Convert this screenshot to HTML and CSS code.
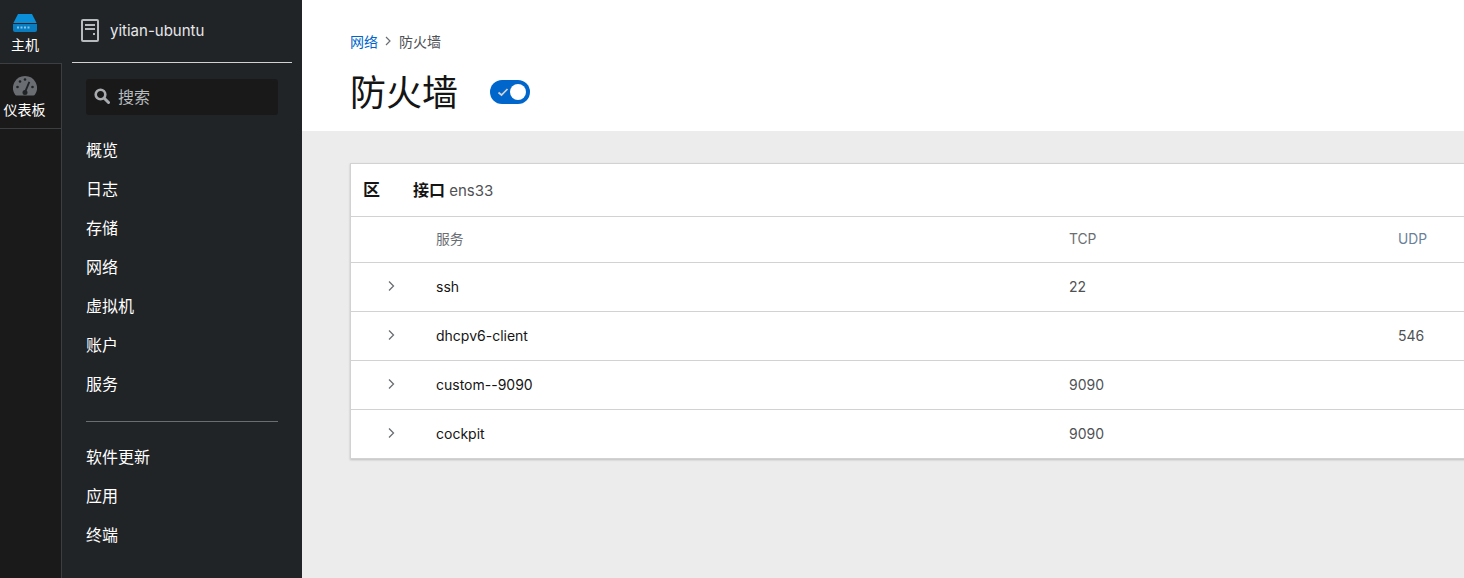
FILE: index.html
```html
<!DOCTYPE html>
<html lang="zh-CN">
<head>
<meta charset="utf-8">
<title>防火墙</title>
<link rel="stylesheet" href="styles.css">
</head>
<body>
<div class="app">
  <nav class="rail">
    <a class="rail-item rail-active">
      <svg class="rail-icon" viewBox="0 0 24 18" width="24" height="18"><path fill="#0a8fd8" d="M5 0h14l4.600 9H.4z"/><path fill="#0a7cc0" d="M0 10h24v6a2 2 0 0 1-2 2H2a2 2 0 0 1-2-2z"/><g fill="#7fc4ea"><rect x="4" y="12.500" width="2" height="2"/><rect x="7.500" y="12.500" width="2" height="2"/><rect x="11" y="12.500" width="2" height="2"/><rect x="14.500" y="12.500" width="2" height="2"/></g></svg>
      <span>主机</span>
    </a>
    <a class="rail-item rail-dash">
      <svg class="rail-icon" viewBox="0 0 24 20" width="24" height="20"><path fill="#6a6e73" d="M12 0a12 12 0 0 1 10 18.600 2 2 0 0 1-1.600.900H3.600A2 2 0 0 1 2 18.600 12 12 0 0 1 12 0z"/><g fill="#212427"><circle cx="4.500" cy="11" r="1.300"/><circle cx="7" cy="5.500" r="1.300"/><circle cx="12" cy="3.500" r="1.300"/><circle cx="19.500" cy="11" r="1.300"/><circle cx="12" cy="16.500" r="2.500"/><path d="M15.500 5.500l1.700.7-4 9.500-1.700-.7z"/></g></svg>
      <span>仪表板</span>
    </a>
  </nav>
  <aside class="sidebar">
    <div class="host">
      <svg viewBox="0 0 18 23" width="18" height="23"><rect x="1" y="1" width="16" height="21" rx="1" fill="none" stroke="#b8bbbe" stroke-width="2"/><path d="M4 5h10v2H4zM4 9h10v2H4z" fill="#b8bbbe"/><rect x="12" y="14" width="2" height="2" fill="#b8bbbe"/></svg>
      <span>yitian-ubuntu</span>
    </div>
    <div class="search">
      <svg viewBox="0 0 16 16" width="16" height="16"><circle cx="6.500" cy="6.500" r="4.800" fill="none" stroke="#a9abae" stroke-width="2.600"/><path d="M10 10l4.500 4.500" stroke="#a9abae" stroke-width="3" stroke-linecap="round"/></svg>
      <span>搜索</span>
    </div>
    <ul class="menu">
      <li>概览</li><li>日志</li><li>存储</li><li>网络</li><li>虚拟机</li><li>账户</li><li>服务</li>
    </ul>
    <hr class="menu-sep">
    <ul class="menu">
      <li>软件更新</li><li>应用</li><li>终端</li>
    </ul>
  </aside>
  <main class="main">
    <header class="page-head">
      <div class="crumbs">
        <a class="crumb-link">网络</a>
        <svg viewBox="0 0 8 10" width="8" height="10"><path d="M2 1l4 4-4 4" fill="none" stroke="#6a6e73" stroke-width="1.200"/></svg>
        <span>防火墙</span>
      </div>
      <div class="title-row">
        <h1>防火墙</h1>
        <span class="toggle">
          <svg viewBox="0 0 12 10" width="12" height="10"><path d="M1.500 5.500l3 2.500 6-6" fill="none" stroke="#d2d2d2" stroke-width="1.700"/></svg>
          <i class="knob"></i>
        </span>
      </div>
    </header>
    <section class="content">
      <div class="card">
        <div class="zone-head">
          <strong class="zone-label">区</strong>
          <span class="zone-if"><strong>接口</strong> ens33</span>
        </div>
        <div class="row row-head">
          <span></span><span class="cell-svc">服务</span><span>TCP</span><span class="udp-head">UDP</span>
        </div>
        <div class="row">
          <span class="chev"><svg viewBox="0 0 8 12" width="8" height="12"><path d="M2 1.500L6.500 6 2 10.500" fill="none" stroke="#6a6e73" stroke-width="1.300"/></svg></span>
          <span class="svc">ssh</span><span>22</span><span></span>
        </div>
        <div class="row">
          <span class="chev"><svg viewBox="0 0 8 12" width="8" height="12"><path d="M2 1.500L6.500 6 2 10.500" fill="none" stroke="#6a6e73" stroke-width="1.300"/></svg></span>
          <span class="svc">dhcpv6-client</span><span></span><span>546</span>
        </div>
        <div class="row">
          <span class="chev"><svg viewBox="0 0 8 12" width="8" height="12"><path d="M2 1.500L6.500 6 2 10.500" fill="none" stroke="#6a6e73" stroke-width="1.300"/></svg></span>
          <span class="svc">custom--9090</span><span>9090</span><span></span>
        </div>
        <div class="row">
          <span class="chev"><svg viewBox="0 0 8 12" width="8" height="12"><path d="M2 1.500L6.500 6 2 10.500" fill="none" stroke="#6a6e73" stroke-width="1.300"/></svg></span>
          <span class="svc">cockpit</span><span>9090</span><span></span>
        </div>
      </div>
    </section>
  </main>
</div>
</body>
</html>
```
FILE: styles.css
```css
* { box-sizing: border-box; }
html, body { margin: 0; height: 100%; overflow: hidden; }
body {
  font-family: Inter, "Noto Sans CJK SC", sans-serif;
  font-size: 14px;
  color: #151515;
}
.app { display: flex; height: 578px; }

.rail {
  width: 62px;
  flex: none;
  background: #1a1a1a;
  border-right: 1px solid #3c3f42;
  color: #fff;
}
.rail-item {
  height: 64px;
  display: flex;
  flex-direction: column;
  align-items: center;
  font-size: 14px;
  line-height: 20px;
  padding-right: 12px;
  border-bottom: 1px solid #3c3f42;
}
.rail-active {
  background: #212427;
  width: 62px;
  padding-top: 14px;
  gap: 3px;
}
.rail-dash { height: 65px; padding-top: 12px; gap: 4px; }
.rail-icon { display: block; }

.sidebar {
  width: 240px;
  flex: none;
  background: #212427;
  color: #fff;
  padding: 0 10px;
}
.host {
  height: 63px;
  border-bottom: 1px solid #d2d2d2;
  display: flex;
  align-items: center;
  gap: 11px;
  padding: 0 0 2px 9px;
  font-size: 15px;
  color: #e6e8ea;
}
.search {
  margin: 16px 14px 16px;
  height: 36px;
  background: #191919;
  border-radius: 3px;
  display: flex;
  align-items: center;
  gap: 8px;
  padding: 0 0 2px 8px;
  font-size: 16px;
  color: #b8bbbe;
}
.menu { list-style: none; margin: 0; padding: 0 14px; }
.menu li { height: 39px; line-height: 38px; font-size: 16px; }
.menu-sep {
  margin: 17px 14px 16px;
  border: 0;
  border-top: 1px solid #6a6e73;
}

.main { flex: 1; min-width: 0; display: flex; flex-direction: column; overflow: hidden; }
.page-head { height: 131px; background: #fff; padding: 31px 48px 0; }
.crumbs { display: flex; align-items: center; gap: 6px; height: 20px; color: #4f5255; font-size: 14px; }
.crumbs span { margin-left: 1px; }
.crumb-link { color: #06c; }
.title-row { display: flex; align-items: center; gap: 32px; margin-top: 11px; }
h1 { margin: 0; font-size: 36px; font-weight: 400; line-height: 60px; position: relative; top: 1px; }
.toggle {
  width: 40px; height: 24px; border-radius: 12px; background: #06c;
  display: flex; align-items: center; justify-content: space-between; padding: 0 4px 0 7px;
}
.knob { width: 16px; height: 16px; border-radius: 50%; background: #fff; display: block; }

.content { flex: 1; background: #ececec; padding: 32px 0 0 48px; }
.card {
  width: 1200px;
  background: #fff;
  border: 1px solid #d2d2d2;
  box-shadow: 0 1px 2px rgba(3, 3, 3, .2);
}
.zone-head {
  height: 53px;
  display: flex;
  align-items: center;
  gap: 33px;
  padding: 0 0 3px 12px;
  border-bottom: 1px solid #d2d2d2;
  color: #4f5255;
}
.zone-label { font-size: 17px; color: #151515; font-weight: 700; }
.zone-if { font-size: 15px; }
.zone-if strong { color: #151515; font-size: 16px; }
.row {
  display: grid;
  grid-template-columns: 85px 633px 329px 1fr;
  align-items: center;
  height: 49px;
  padding-bottom: 2px;
  border-bottom: 1px solid #d2d2d2;
  font-size: 14px;
  color: #4f5255;
}
.row:last-child { border-bottom: 0; height: 48px; padding-bottom: 1px; }
.row-head { height: 46px; padding-bottom: 1px; color: #6a6e73; font-size: 13.8px; }
.udp-head { color: #6a7f9a; }
.cell-svc { color: #6a6e73; margin-bottom: 3px; }
.svc { color: #151515; font-weight: 400; }
.chev { display: flex; justify-content: center; padding-right: 5px; }
.chev svg { display: block; margin-top: -1px; }
```
